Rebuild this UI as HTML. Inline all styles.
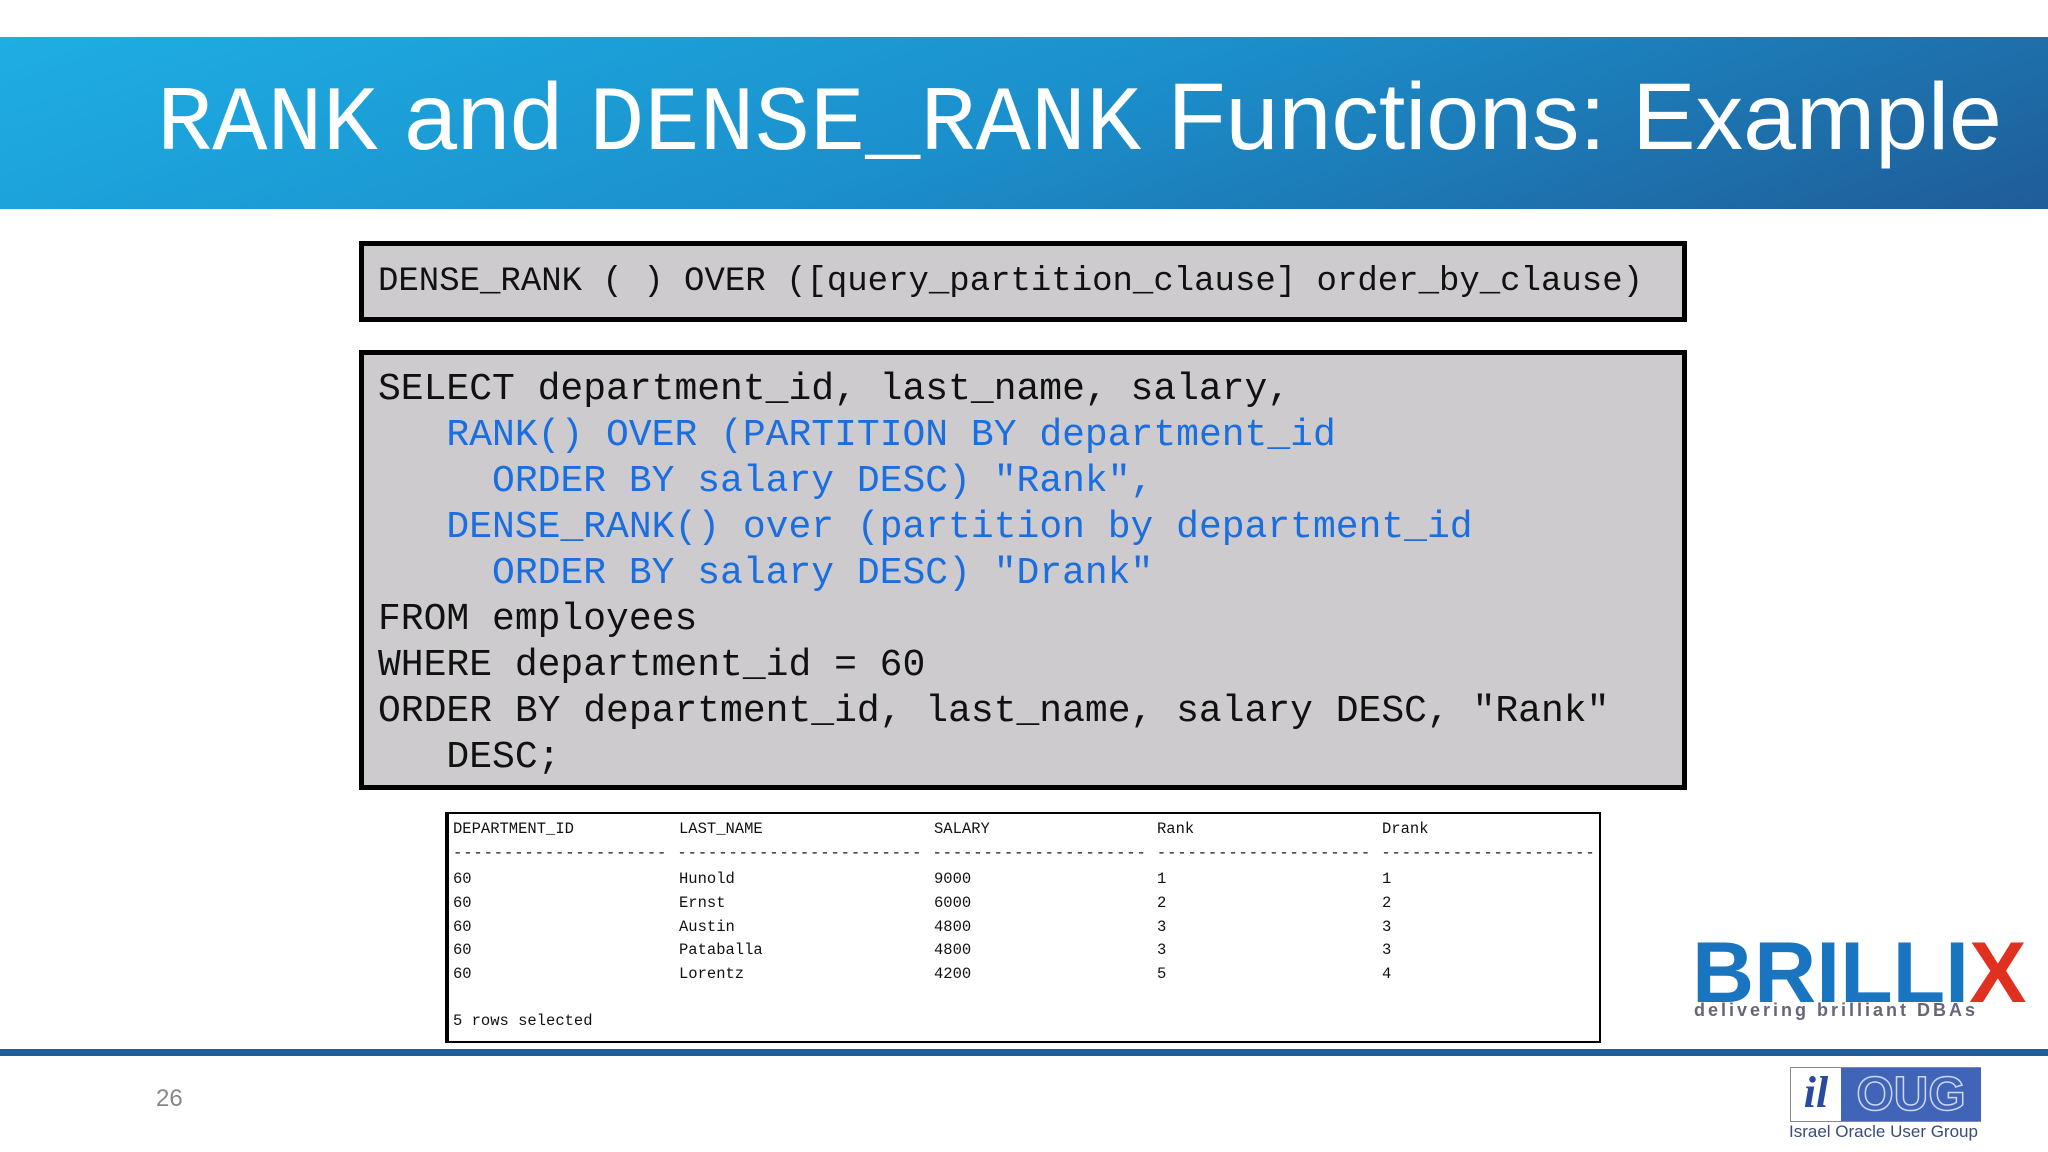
<!DOCTYPE html>
<html><head><meta charset="utf-8"><style>
*{margin:0;padding:0;box-sizing:border-box}
body{width:2048px;height:1152px;background:#fff;position:relative;overflow:hidden;font-family:"Liberation Sans",sans-serif}
.hdr{position:absolute;left:0;top:37px;width:2048px;height:172px;background:linear-gradient(160deg,#1eaee4 0%,#1b8fcb 50%,#1f5c98 100%)}
.title{position:absolute;left:157px;top:70px;color:#fff;font-size:95px;white-space:nowrap;line-height:1}
.title .m{font-family:"Liberation Mono",monospace;font-size:92px;font-weight:normal}
.box{position:absolute;left:359px;width:1328px;background:#cdcbce;border:5px solid #000;font-family:"Liberation Mono",monospace;color:#111;white-space:pre}
.b1{top:241px;height:81px;font-size:34px;padding:17px 0 0 14px}
.b2{top:350px;height:440px;font-size:38px;line-height:46px;padding:12px 0 0 14px}
.bl{color:#1a6ee0}
.tbl{position:absolute;left:445px;top:812px;width:1156px;height:231px;border:2px solid #000;border-left-width:4px;background:#fff;font-family:"Liberation Mono",monospace;font-size:15.5px;color:#111}
.tbl div{position:absolute;white-space:pre}
.bar{position:absolute;left:0;top:1049px;width:2048px;height:7px;background:#1f5f9a}
.pn{position:absolute;left:156px;top:1085px;font-size:24px;color:#888}
</style></head><body>
<div class="hdr"></div>
<div class="title"><span class="m">RANK</span> and <span class="m">DENSE_RANK</span> Functions: Example</div>
<div class="box b1">DENSE_RANK ( ) OVER ([query_partition_clause] order_by_clause)</div>
<div class="box b2">SELECT department_id, last_name, salary,
   <span class="bl">RANK() OVER (PARTITION BY department_id</span>
     <span class="bl">ORDER BY salary DESC) "Rank",</span>
   <span class="bl">DENSE_RANK() over (partition by department_id</span>
     <span class="bl">ORDER BY salary DESC) "Drank"</span>
FROM employees
WHERE department_id = 60
ORDER BY department_id, last_name, salary DESC, "Rank"
   DESC;</div>
<div class="tbl">
<div style="left:4px;top:6px">DEPARTMENT_ID</div><div style="left:230px;top:6px">LAST_NAME</div><div style="left:485px;top:6px">SALARY</div><div style="left:708px;top:6px">Rank</div><div style="left:933px;top:6px">Drank</div>
<div style="left:4px;top:30px;letter-spacing:0.9px">--------------------- ------------------------ --------------------- --------------------- ---------------------</div>
<div style="left:4px;top:54px;line-height:23.8px">60
60
60
60
60</div>
<div style="left:230px;top:54px;line-height:23.8px">Hunold
Ernst
Austin
Pataballa
Lorentz</div>
<div style="left:485px;top:54px;line-height:23.8px">9000
6000
4800
4800
4200</div>
<div style="left:708px;top:54px;line-height:23.8px">1
2
3
3
5</div>
<div style="left:933px;top:54px;line-height:23.8px">1
2
3
3
4</div>
<div style="left:4px;top:198px">5 rows selected</div>
</div>
<div class="bar"></div>
<div class="pn">26</div>
<div style="position:absolute;left:1692px;top:930px;font-family:'Liberation Sans',sans-serif;font-weight:bold;font-size:86px;color:#1a75c0;letter-spacing:0px;line-height:1">BRILLI<span style="color:#e03020">X</span></div>
<div style="position:absolute;left:1694px;top:1000px;font-size:18px;font-weight:bold;color:#667;letter-spacing:3px">delivering brilliant DBAs</div>
<div style="position:absolute;left:1790px;top:1067px;width:191px;height:55px;border:1px solid #889;background:#fff">
<div style="position:absolute;left:0;top:0;width:50px;height:53px;font-family:'Liberation Serif',serif;font-style:italic;font-weight:bold;font-size:44px;color:#2a4aa0;text-align:center;line-height:50px">il</div>
<div style="position:absolute;left:50px;top:0;width:140px;height:53px;background:#3f64b8;color:#3f64b8;font-size:48px;font-weight:bold;text-align:center;line-height:53px;-webkit-text-stroke:1.5px #cfd8f0">OUG</div>
</div>
<div style="position:absolute;left:1789px;top:1122px;font-size:17px;color:#3a4a7a">Israel Oracle User Group</div>
</body></html>
